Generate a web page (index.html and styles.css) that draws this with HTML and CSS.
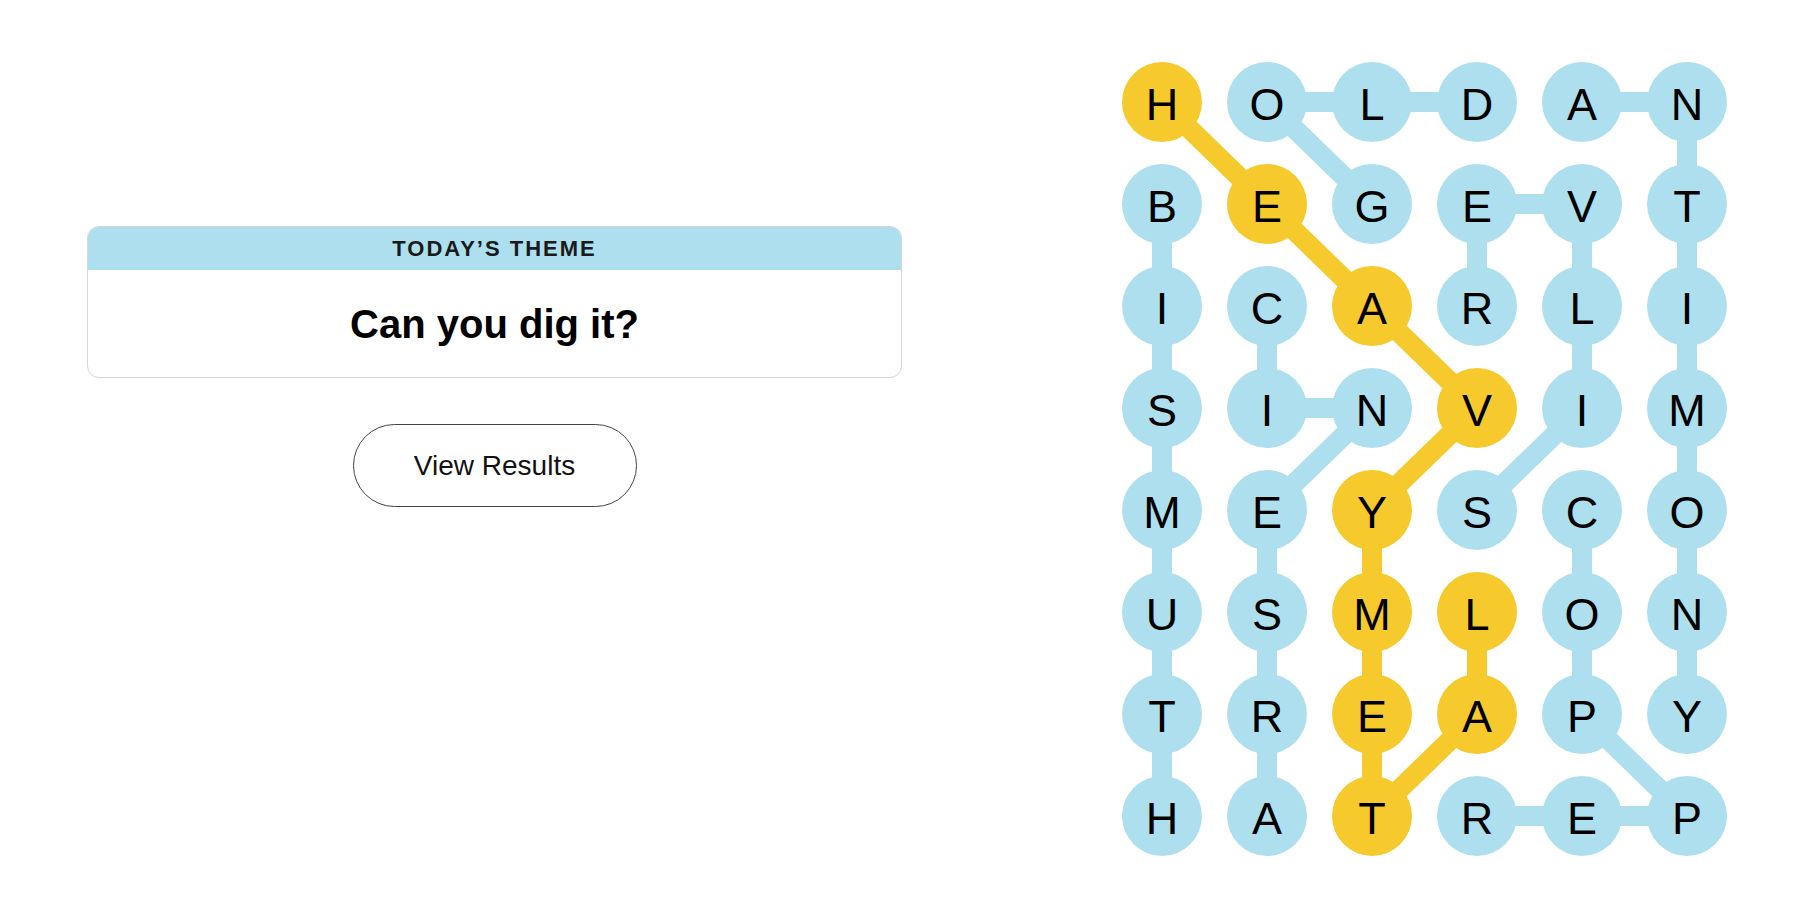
FILE: index.html
```html
<!DOCTYPE html>
<html lang="en">
<head>
  <meta charset="UTF-8">
  <title>Strands</title>
  <link rel="stylesheet" href="styles.css">
</head>
<body>
  <main class="page">
    <section class="panel">
      <div class="theme-card">
        <div class="theme-label">TODAY’S THEME</div>
        <div class="theme-clue">Can you dig it?</div>
      </div>
      <button class="results-btn">View Results</button>
    </section>

    <section class="board">
      <svg class="strands" width="605" height="794" viewBox="0 0 605 794">
        <g class="found">
          <polyline points="40,142 40,754"/>
          <polyline points="250,142 145,40 355,40"/>
          <polyline points="460,40 565,40 565,652"/>
          <polyline points="145,754 145,448 250,346 145,346 145,244"/>
          <polyline points="355,448 460,346 460,142 355,142 355,244"/>
          <polyline points="460,448 460,652 565,754 355,754"/>
        </g>
        <g class="spangram">
          <polyline points="40,40 145,142 250,244 355,346 250,448 250,754 355,652 355,550"/>
        </g>
      </svg>
      <div class="grid">
        <div class="cell gold">H</div><div class="cell">O</div><div class="cell">L</div><div class="cell">D</div><div class="cell">A</div><div class="cell">N</div>
        <div class="cell">B</div><div class="cell gold">E</div><div class="cell">G</div><div class="cell">E</div><div class="cell">V</div><div class="cell">T</div>
        <div class="cell">I</div><div class="cell">C</div><div class="cell gold">A</div><div class="cell">R</div><div class="cell">L</div><div class="cell">I</div>
        <div class="cell">S</div><div class="cell">I</div><div class="cell">N</div><div class="cell gold">V</div><div class="cell">I</div><div class="cell">M</div>
        <div class="cell">M</div><div class="cell">E</div><div class="cell gold">Y</div><div class="cell">S</div><div class="cell">C</div><div class="cell">O</div>
        <div class="cell">U</div><div class="cell">S</div><div class="cell gold">M</div><div class="cell gold">L</div><div class="cell">O</div><div class="cell">N</div>
        <div class="cell">T</div><div class="cell">R</div><div class="cell gold">E</div><div class="cell gold">A</div><div class="cell">P</div><div class="cell">Y</div>
        <div class="cell">H</div><div class="cell">A</div><div class="cell gold">T</div><div class="cell">R</div><div class="cell">E</div><div class="cell">P</div>
      </div>
    </section>
  </main>
</body>
</html>
```

FILE: styles.css
```css
body {
  margin: 0;
  background: #fff;
  color: #121212;
  font-family: 'Liberation Sans', Arial, sans-serif;
}

.page {
  display: flex;
  align-items: flex-start;
  padding: 62px 0 0 87px;
}

.panel {
  width: 815px;
  padding-top: 164px;
  display: flex;
  flex-direction: column;
  align-items: center;
}

.theme-card {
  width: 100%;
  box-sizing: border-box;
  border: 1px solid #d6d6d6;
  border-radius: 12px;
  overflow: hidden;
}

.theme-label {
  height: 43px;
  line-height: 44px;
  background: #aedfee;
  text-align: center;
  font-size: 22px;
  font-weight: bold;
  letter-spacing: 2px;
  color: #1a1a1a;
}

.theme-clue {
  height: 107px;
  line-height: 108px;
  text-align: center;
  font-size: 40px;
  font-weight: bold;
  color: #000;
}

.results-btn {
  margin-top: 46px;
  width: 284px;
  height: 83px;
  border: 1px solid #444;
  border-radius: 42px;
  background: #fff;
  color: #121212;
  font-family: 'Liberation Sans', Arial, sans-serif;
  font-size: 28px;
  cursor: pointer;
}

.board {
  position: relative;
  margin-left: 220px;
  width: 605px;
  height: 794px;
}

.strands {
  position: absolute;
  top: 0;
  left: 0;
}

.strands polyline {
  fill: none;
  stroke-width: 20;
  stroke-linejoin: round;
}

.found polyline {
  stroke: #aedfee;
}

.spangram polyline {
  stroke: #f6c92c;
}

.grid {
  position: relative;
  display: grid;
  grid-template-columns: repeat(6, 80px);
  grid-auto-rows: 80px;
  column-gap: 25px;
  row-gap: 22px;
}

.cell {
  height: 80px;
  border-radius: 50%;
  background: #aedfee;
  color: #000;
  text-align: center;
  font-size: 45px;
  line-height: 86px;
}

.cell.gold {
  background: #f6c92c;
}
```
